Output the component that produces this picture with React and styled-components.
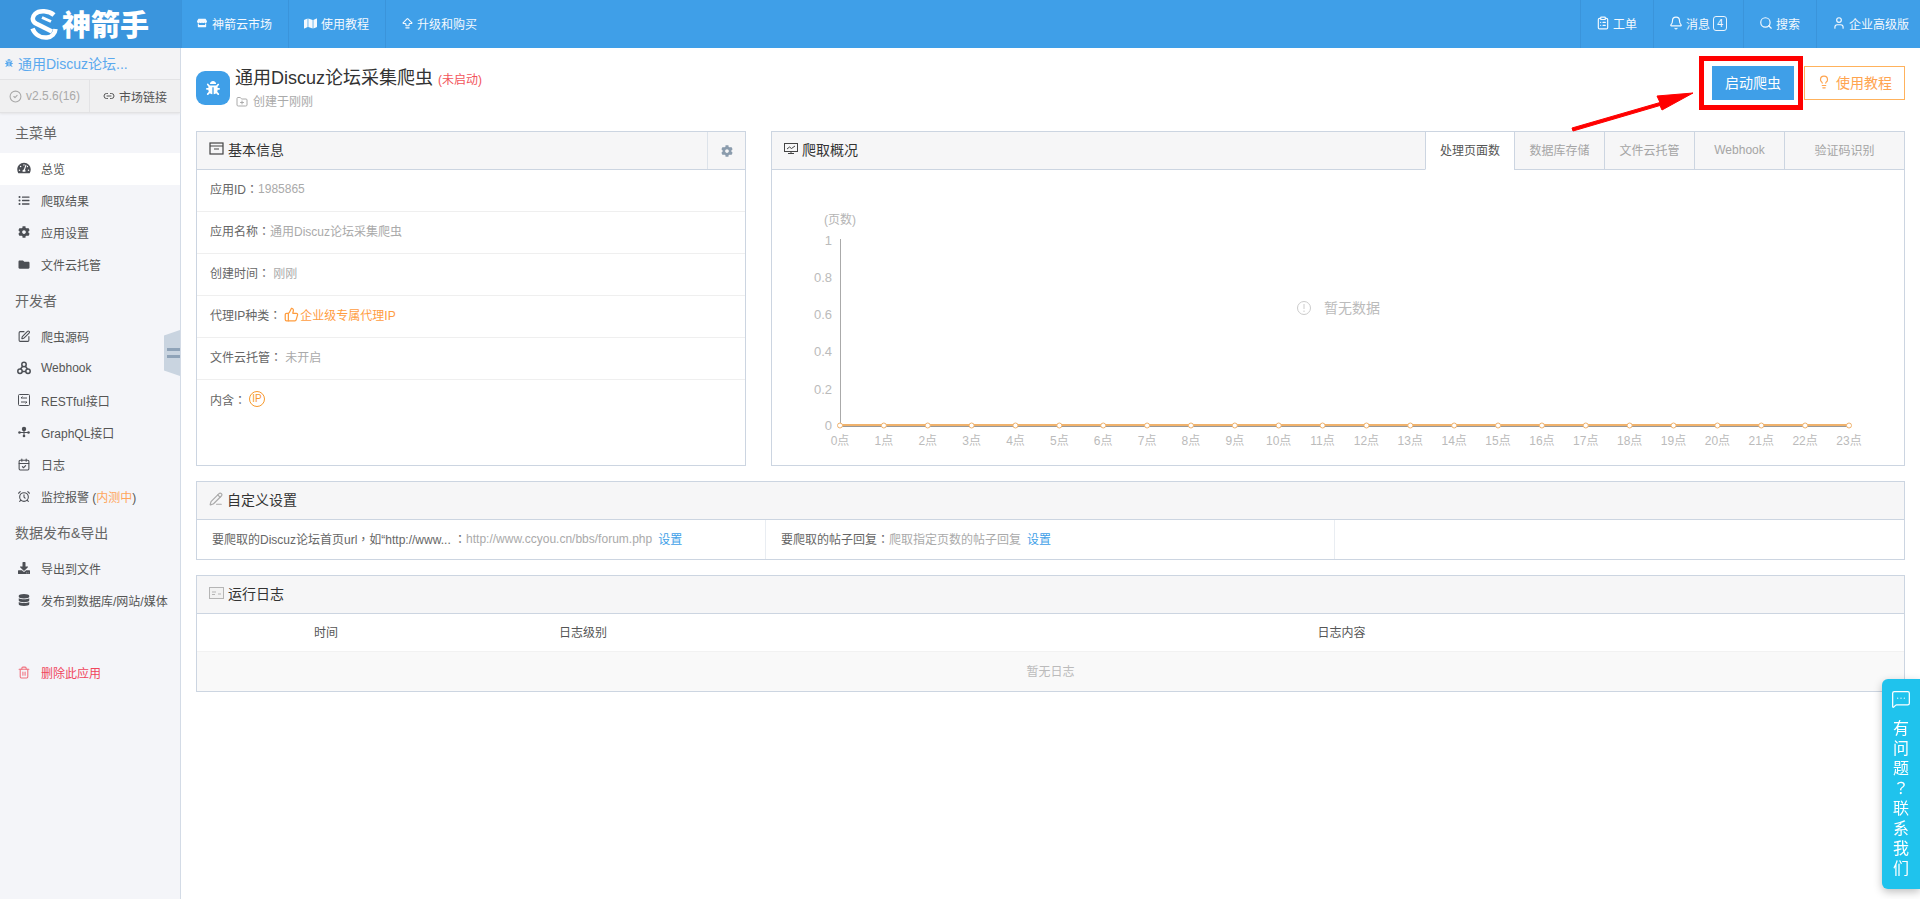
import React from "react";
import styled, { createGlobalStyle } from "styled-components";
import {
  AlarmClock, ArrowBigUpDash, Bell, CalendarCheck, CircleCheck, ClipboardList, FolderPlus, Lightbulb, Link2,
  MessageSquareMore, PencilLine, Search, SquarePen, ThumbsUp, Trash2, User,
} from "lucide-react";
import { FaBug, FaCog, FaDatabase, FaDownload, FaFolder, FaListUl, FaMap, FaStore, FaTachometerAlt } from "react-icons/fa";

const GlobalStyle = createGlobalStyle`
  html, body {
    margin: 0;
    padding: 0;
    height: 100%;
    overflow: hidden;
    background: #fff;
    font-family: "Liberation Sans", "Noto Sans CJK SC", sans-serif;
    font-size: 12px;
    color: #555;
  }
  * { box-sizing: border-box; }
`;

const Page = styled.div`
  width: 100vw;
  height: 100vh;
  display: flex;
  flex-direction: column;
`;

const Header = styled.header`
  height: 48px;
  flex: none;
  display: flex;
  background: #3f9fe8;
  color: #f4f9fe;
`;

const LogoBox = styled.div`
  width: 181px;
  display: flex;
  align-items: center;
  padding-left: 30px;
  gap: 4px;
  background: #3a95dd;
`;

const LogoText = styled.span`
  font-family: "Noto Sans CJK SC", sans-serif;
  font-size: 29px;
  font-weight: 900;
  line-height: 1;
  color: #fff;
  padding-bottom: 2px;
`;

const Nav = styled.nav`
  display: flex;
  ${(p) => p.$right && "margin-left: auto;"}
`;

const NavItem = styled.a`
  display: flex;
  align-items: center;
  gap: ${(p) => p.$gap || 3}px;
  padding: 0 ${(p) => p.$pr || 16}px 2px 15px;
  border-left: 1px solid #3a94db;
  font-size: 12px;
  white-space: nowrap;
`;

const Count = styled.span`
  display: inline-flex;
  align-items: center;
  justify-content: center;
  width: 14px;
  height: 15px;
  border: 1px solid #eaf4fd;
  border-radius: 3px;
  font-size: 11px;
`;

const Body = styled.div`
  flex: 1;
  display: flex;
  min-height: 0;
`;

const Sidebar = styled.aside`
  position: relative;
  width: 181px;
  flex: none;
  background: #f4f5f9;
  border-right: 1px solid #d3dbe6;
`;

const AppName = styled.div`
  height: 32px;
  display: flex;
  align-items: center;
  gap: 5px;
  padding: 0 0 2px 5px;
  font-size: 14px;
  color: #5aa9ee;
  background: #f3f3f5;
  border-bottom: 1px solid #e3e3e5;
`;

const VersionRow = styled.div`
  height: 33px;
  display: grid;
  grid-template-columns: 90px 1fr;
  background: #f0f0f1;
  border-bottom: 1px solid #e2e2e4;
  box-shadow: 0 1px 2px #e4e4e6;
`;

const VersionCell = styled.div`
  display: flex;
  align-items: center;
  justify-content: center;
  gap: 4px;
  color: ${(p) => p.$muted ? "#a9a9a9" : "#555"};
  ${(p) => p.$divider && "border-right: 1px solid #e3e3e5;"}
`;

const GroupLabel = styled.div`
  height: 40px;
  display: flex;
  align-items: center;
  padding: 0 0 2px 15px;
  font-size: 14px;
  color: #666;
`;

const MenuItem = styled.a`
  height: 32px;
  display: flex;
  align-items: center;
  padding: 0 0 2px 17px;
  gap: 10px;
  font-size: 12px;
  color: ${(p) => p.$danger ? "#f0465c" : "#555"};
  background: ${(p) => p.$active ? "#fff" : "transparent"};
  ${(p) => p.$gapTop && `margin-top: ${p.$gapTop}px;`}

  svg { width: 14px; flex: none; color: ${(p) => p.$danger ? "#f0727f" : "#4c4f55"}; }
`;

const Beta = styled.span`
  color: #ffa65c;
`;

const Collapse = styled.div`
  position: absolute;
  right: 0;
  top: 282px;
  width: 16px;
  height: 46px;
  display: flex;
  flex-direction: column;
  justify-content: center;
  align-items: flex-end;
  gap: 4px;
  background: #c9d4e0;
  clip-path: polygon(0 12%, 100% 0, 100% 100%, 0 88%);
`;

const CollapseBar = styled.i`
  display: block;
  width: 13px;
  height: 3px;
  background: #8fa3b8;
`;

const Main = styled.main`
  flex: 1;
  min-width: 0;
  padding: 0 15px;
`;

const TopRow = styled.div`
  height: 83px;
  padding-top: 18px;
  display: flex;
  justify-content: space-between;
  align-items: flex-start;
`;

const TitleBlock = styled.div`
  display: flex;
  gap: 5px;
  margin-top: 5px;
`;

const AppIcon = styled.div`
  width: 34px;
  height: 34px;
  border-radius: 9px;
  background: #3f9fe8;
  display: flex;
  align-items: center;
  justify-content: center;
  color: #fff;
`;

const TitleText = styled.h1`
  margin: -4px 0 0;
  font-size: 18px;
  line-height: 22px;
  font-weight: 400;
  color: #333;
`;

const Status = styled.span`
  margin-left: 5px;
  font-size: 12px;
  color: #f2545b;
`;

const SubTitle = styled.div`
  display: flex;
  align-items: center;
  gap: 5px;
  margin-top: 3px;
  padding-left: 1px;
  color: #aaa;
  line-height: 16px;
`;

const Actions = styled.div`
  display: flex;
  gap: 10px;
`;

const ActionWrap = styled.div`
  position: relative;
`;

const PrimaryButton = styled.button`
  width: 82px;
  height: 34px;
  border: 0;
  padding: 0 0 2px;
  background: #3f9fe8;
  color: #fff;
  font: inherit;
  font-size: 14px;
`;

const RedFrame = styled.div`
  position: absolute;
  left: -13px;
  right: -9px;
  top: -10px;
  bottom: -10px;
  border: 5px solid #f00;
  pointer-events: none;
`;

const RedArrow = styled.svg`
  position: absolute;
  left: -142px;
  top: 24px;
`;

const OutlineButton = styled.button`
  width: 101px;
  height: 34px;
  border: 1px solid #ffb25c;
  padding: 0 0 2px;
  background: #fff;
  color: #ffa44f;
  font: inherit;
  font-size: 14px;
  display: flex;
  align-items: center;
  justify-content: center;
  gap: 5px;
`;

const Panel = styled.section`
  border: 1px solid #ccd5e1;
  background: #fff;
  ${(p) => p.$mt && `margin-top: ${p.$mt}px;`}
`;

const PanelRow = styled.div`
  height: 335px;
  display: grid;
  grid-template-columns: 550px 1fr;
  gap: 25px;
`;

const PanelHead = styled.div`
  height: 38px;
  display: flex;
  align-items: stretch;
  background: #f6f6f7;
  border-bottom: 1px solid #ccd5e1;
`;

const PanelTitle = styled.div`
  flex: 1;
  display: flex;
  align-items: center;
  gap: 4px;
  padding: 0 0 4px 12px;
  font-size: 14px;
  color: #333;
`;

const GearBox = styled.div`
  width: 38px;
  display: flex;
  align-items: center;
  justify-content: center;
  border-left: 1px solid #dde3ea;
  color: #8b9cad;
`;

const Tabs = styled.div`
  display: flex;
  margin-bottom: -1px;
`;

const Tab = styled.div`
  width: ${(p) => p.$w}px;
  display: flex;
  align-items: center;
  justify-content: center;
  padding-bottom: 2px;
  border-left: 1px solid #ccd5e1;
  border-bottom: 1px solid ${(p) => p.$active ? "#fff" : "#ccd5e1"};
  background: ${(p) => p.$active ? "#fff" : "#f6f6f7"};
  color: ${(p) => p.$active ? "#555" : "#a5a5a5"};
`;

const InfoList = styled.div`
  display: flex;
  flex-direction: column;
`;

const InfoRow = styled.div`
  height: 42px;
  display: flex;
  align-items: center;
  padding: 0 0 4px 13px;
  color: #666;
  ${(p) => !p.$last && "border-bottom: 1px solid #efefef;"}
`;

const Colon = styled.span`
  font-family: "Noto Sans CJK TC", sans-serif;
`;

const Muted = styled.span`
  color: #aaa;
`;

const Orange = styled.span`
  display: inline-flex;
  align-items: center;
  gap: 1px;
  margin-left: 3px;
  color: #ff9d3f;
`;

const IpBadge = styled.span`
  display: inline-flex;
  align-items: center;
  justify-content: center;
  width: 16px;
  height: 16px;
  margin-left: 3px;
  border: 1.5px solid #f79a2e;
  border-radius: 50%;
  font-size: 10px;
  line-height: 1;
  color: #f79a2e;
`;

const Chart = styled.svg`
  display: block;
  font-family: "Liberation Sans", "Noto Sans CJK SC", sans-serif;
  font-size: 12px;
`;

const SettingGrid = styled.div`
  height: 39px;
  display: grid;
  grid-template-columns: repeat(3, 1fr);
`;

const SettingCell = styled.div`
  display: flex;
  align-items: center;
  padding: 0 0 2px 15px;
  color: #666;
  white-space: pre;
  ${(p) => !p.$last && "border-right: 1px solid #e9edf2;"}
`;

const Action = styled.a`
  margin-left: 6px;
  color: #3f9fe8;
`;

const LogHead = styled.div`
  height: 38px;
  display: grid;
  grid-template-columns: 258px 256px 1fr;
  align-items: center;
  padding-bottom: 2px;
  text-align: center;
  color: #555;
  border-bottom: 1px solid #f2f2f2;
`;

const LogCol = styled.div`
  ${(p) => p.$pl && `padding-left: ${p.$pl}px;`}
`;

const LogEmpty = styled.div`
  height: 39px;
  display: flex;
  align-items: center;
  justify-content: center;
  padding-bottom: 2px;
  background: #f9f9f9;
  color: #bbb;
`;

const Feedback = styled.div`
  position: fixed;
  right: 0;
  top: 679px;
  width: 38px;
  height: 210px;
  padding-top: 10px;
  display: flex;
  flex-direction: column;
  align-items: center;
  background: #1fc3ed;
  border-radius: 6px 0 0 6px;
  box-shadow: 0 3px 8px rgba(0, 0, 0, 0.25);
  color: #fff;
`;

const FeedbackText = styled.div`
  width: 16px;
  margin-top: 8px;
  font-family: "Noto Sans CJK TC", sans-serif;
  font-size: 16px;
  line-height: 20px;
  text-align: center;
  line-break: anywhere;
  word-break: break-all;
`;

const LogoMark = () => (
  <svg width="28" height="31" viewBox="0 0 28 31" fill="none" stroke="#fff" strokeWidth="4.500">
    <path d="M24 6C19 1.500 9 1 5 5c-3.500 3.500-2.500 7.500 1 9.500l16 8" />
    <path d="M2.500 19.500C5 26 11 29 17 28.500c5-.5 8-4 8.500-8.500" />
    <path d="M12 8.500l9 4" strokeWidth="3" />
  </svg>
);

const WindowIcon = () => (
  <svg width="15" height="13" viewBox="0 0 15 13" fill="none" stroke="#444" strokeWidth="1.200">
    <rect x="1" y="1" width="13" height="11" />
    <path d="M1 4h13M5 7h5" />
  </svg>
);

const ScreenIcon = () => (
  <svg width="14" height="13" viewBox="0 0 14 13" fill="none" stroke="#444">
    <rect x=".5" y="1.500" width="13" height="8" />
    <path d="M4 11.500h6M7 9.500v2M3 7l2.500-2 2 1.500L11 4" />
  </svg>
);

const LogIcon = () => (
  <svg width="15" height="12" viewBox="0 0 15 12" fill="#f2f2f2" stroke="#b5b5b5">
    <rect x=".5" y=".5" width="14" height="11" />
    <path d="M3 5h4M3 7.500h3M9 7h3" />
  </svg>
);

const WebhookIcon = () => (
  <svg width="14" height="14" viewBox="0 0 14 14" fill="none" stroke="#4c4f55" strokeWidth="1.500">
    <circle cx="7" cy="3.500" r="2.200" />
    <circle cx="3" cy="10.200" r="2.200" />
    <circle cx="11" cy="10.200" r="2.200" />
    <path d="M5.500 5.500 3.500 8M8.500 5.500l2 2.500M5 10.500h4" />
  </svg>
);

const RestIcon = () => (
  <svg width="14" height="14" viewBox="0 0 14 14" fill="none" stroke="#4c4f55">
    <rect x="1.500" y="1.500" width="11" height="11" rx="1" />
    <path d="M4 5h6M5.500 3.500 4 5M4 9h6M8.500 10.500 10 9" />
  </svg>
);

const GraphIcon = () => (
  <svg width="14" height="14" viewBox="0 0 14 14" fill="#4c4f55">
    <circle cx="7" cy="4" r="2.200" />
    <circle cx="2.500" cy="7.500" r="1.300" />
    <circle cx="11.500" cy="7.500" r="1.300" />
    <circle cx="7" cy="11" r="1.300" />
    <path d="M6.500 4h1v7h-1zM2 7h10v1H2z" />
  </svg>
);

const hours = Array.from({ length: 24 }, (_, i) => i);
const yTicks = [["1", 75], ["0.8", 112], ["0.6", 149], ["0.4", 186], ["0.2", 224], ["0", 260]];
const xAt = (i) => 68 + i * 43.87;

function CrawlChart() {
  return (
    <Chart width="1132" height="295" viewBox="0 0 1132 295">
      <text x="68" y="54" textAnchor="middle" fill="#b5b5b5">(页数)</text>
      {yTicks.map(([label, y]) => (
        <text key={label} x="60" y={y} textAnchor="end" fill="#bbb" fontSize="13">{label}</text>
      ))}
      <line x1="68.500" y1="69" x2="68.500" y2="256" stroke="#aaa" />
      <line x1="68" y1="256.500" x2={xAt(23)} y2="256.500" stroke="#999" />
      <line x1="68" y1="255" x2={xAt(23)} y2="255" stroke="#f0b26c" strokeWidth="2" />
      {hours.map((h) => (
        <g key={h}>
          <circle cx={xAt(h)} cy="255.500" r="2.500" fill="#fff" stroke="#f0b26c" />
          <text x={xAt(h)} y="275" textAnchor="middle" fill="#bbb">{h}点</text>
        </g>
      ))}
      <circle cx="532" cy="138" r="6.500" fill="none" stroke="#ccc" />
      <path d="M532 134v5M532 140.500v1.500" stroke="#ccc" />
      <text x="580" y="143" textAnchor="middle" fill="#bbb" fontSize="14">暂无数据</text>
    </Chart>
  );
}

export default function App() {
  return (
    <Page>
      <GlobalStyle />
      <Header>
        <LogoBox>
          <LogoMark />
          <LogoText>神箭手</LogoText>
        </LogoBox>
        <Nav>
          <NavItem $gap={5}><FaStore size={10} />神箭云市场</NavItem>
          <NavItem $gap={4}><FaMap size={13} />使用教程</NavItem>
          <NavItem><ArrowBigUpDash size={13} />升级和购买</NavItem>
        </Nav>
        <Nav $right>
          <NavItem><ClipboardList size={14} />工单</NavItem>
          <NavItem><Bell size={14} />消息<Count>4</Count></NavItem>
          <NavItem><Search size={14} />搜索</NavItem>
          <NavItem $pr={11}><User size={14} />企业高级版</NavItem>
        </Nav>
      </Header>
      <Body>
        <Sidebar>
          <AppName><FaBug size={8} />通用Discuz论坛...</AppName>
          <VersionRow>
            <VersionCell $muted $divider><CircleCheck size={13} />v2.5.6(16)</VersionCell>
            <VersionCell><Link2 size={12} />市场链接</VersionCell>
          </VersionRow>
          <GroupLabel>主菜单</GroupLabel>
          <MenuItem $active><FaTachometerAlt size={12} />总览</MenuItem>
          <MenuItem><FaListUl size={11} />爬取结果</MenuItem>
          <MenuItem><FaCog size={12} />应用设置</MenuItem>
          <MenuItem><FaFolder size={11} />文件云托管</MenuItem>
          <GroupLabel>开发者</GroupLabel>
          <MenuItem><SquarePen size={13} />爬虫源码</MenuItem>
          <MenuItem><WebhookIcon />Webhook</MenuItem>
          <MenuItem><RestIcon />RESTful接口</MenuItem>
          <MenuItem><GraphIcon />GraphQL接口</MenuItem>
          <MenuItem><CalendarCheck size={13} />日志</MenuItem>
          <MenuItem><AlarmClock size={13} /><span>监控报警 (<Beta>内测中</Beta>)</span></MenuItem>
          <GroupLabel>数据发布&amp;导出</GroupLabel>
          <MenuItem><FaDownload size={12} />导出到文件</MenuItem>
          <MenuItem><FaDatabase size={12} />发布到数据库/网站/媒体</MenuItem>
          <MenuItem $danger $gapTop={40}><Trash2 size={13} />删除此应用</MenuItem>
          <Collapse><CollapseBar /><CollapseBar /></Collapse>
        </Sidebar>
        <Main>
          <TopRow>
            <TitleBlock>
              <AppIcon><FaBug size={14} /></AppIcon>
              <div>
                <TitleText>通用Discuz论坛采集爬虫<Status>(未启动)</Status></TitleText>
                <SubTitle><FolderPlus size={12} />创建于刚刚</SubTitle>
              </div>
            </TitleBlock>
            <Actions>
              <ActionWrap>
                <PrimaryButton>启动爬虫</PrimaryButton>
                <RedFrame />
                <RedArrow width="125" height="44" viewBox="0 0 125 44">
                  <path d="M2 38 90 12.500 87 6 123 3 92 20 90 15.500 3 41z" fill="#f00" stroke="#f00" strokeLinejoin="round" />
                </RedArrow>
              </ActionWrap>
              <OutlineButton><Lightbulb size={14} />使用教程</OutlineButton>
            </Actions>
          </TopRow>
          <PanelRow>
            <Panel>
              <PanelHead>
                <PanelTitle><WindowIcon />基本信息</PanelTitle>
                <GearBox><FaCog size={12} /></GearBox>
              </PanelHead>
              <InfoList>
                <InfoRow>应用ID<Colon>：</Colon><Muted>1985865</Muted></InfoRow>
                <InfoRow>应用名称<Colon>：</Colon><Muted>通用Discuz论坛采集爬虫</Muted></InfoRow>
                <InfoRow>创建时间<Colon>：</Colon><Muted>&nbsp;刚刚</Muted></InfoRow>
                <InfoRow>代理IP种类<Colon>：</Colon><Orange><ThumbsUp size={15} />企业级专属代理IP</Orange></InfoRow>
                <InfoRow>文件云托管<Colon>：</Colon><Muted>&nbsp;未开启</Muted></InfoRow>
                <InfoRow $last>内含<Colon>：</Colon><IpBadge>IP</IpBadge></InfoRow>
              </InfoList>
            </Panel>
            <Panel>
              <PanelHead>
                <PanelTitle><ScreenIcon />爬取概况</PanelTitle>
                <Tabs>
                  <Tab $w={89} $active>处理页面数</Tab>
                  <Tab $w={90}>数据库存储</Tab>
                  <Tab $w={90}>文件云托管</Tab>
                  <Tab $w={90}>Webhook</Tab>
                  <Tab $w={120}>验证码识别</Tab>
                </Tabs>
              </PanelHead>
              <CrawlChart />
            </Panel>
          </PanelRow>
          <Panel $mt={15}>
            <PanelHead>
              <PanelTitle><PencilLine size={14} color="#aaa" />自定义设置</PanelTitle>
            </PanelHead>
            <SettingGrid>
              <SettingCell>要爬取的Discuz论坛首页url<Colon>，</Colon>如“http://www... <Colon>：</Colon><Muted>http://www.ccyou.cn/bbs/forum.php</Muted><Action>设置</Action></SettingCell>
              <SettingCell>要爬取的帖子回复<Colon>：</Colon><Muted>爬取指定页数的帖子回复</Muted><Action>设置</Action></SettingCell>
              <SettingCell $last />
            </SettingGrid>
          </Panel>
          <Panel $mt={15}>
            <PanelHead>
              <PanelTitle><LogIcon />运行日志</PanelTitle>
            </PanelHead>
            <LogHead>
              <LogCol>时间</LogCol>
              <LogCol>日志级别</LogCol>
              <LogCol $pl={68}>日志内容</LogCol>
            </LogHead>
            <LogEmpty>暂无日志</LogEmpty>
          </Panel>
        </Main>
      </Body>
      <Feedback>
        <MessageSquareMore size={20} strokeWidth={1.500} />
        <FeedbackText>有问题？联系我们</FeedbackText>
      </Feedback>
    </Page>
  );
}
